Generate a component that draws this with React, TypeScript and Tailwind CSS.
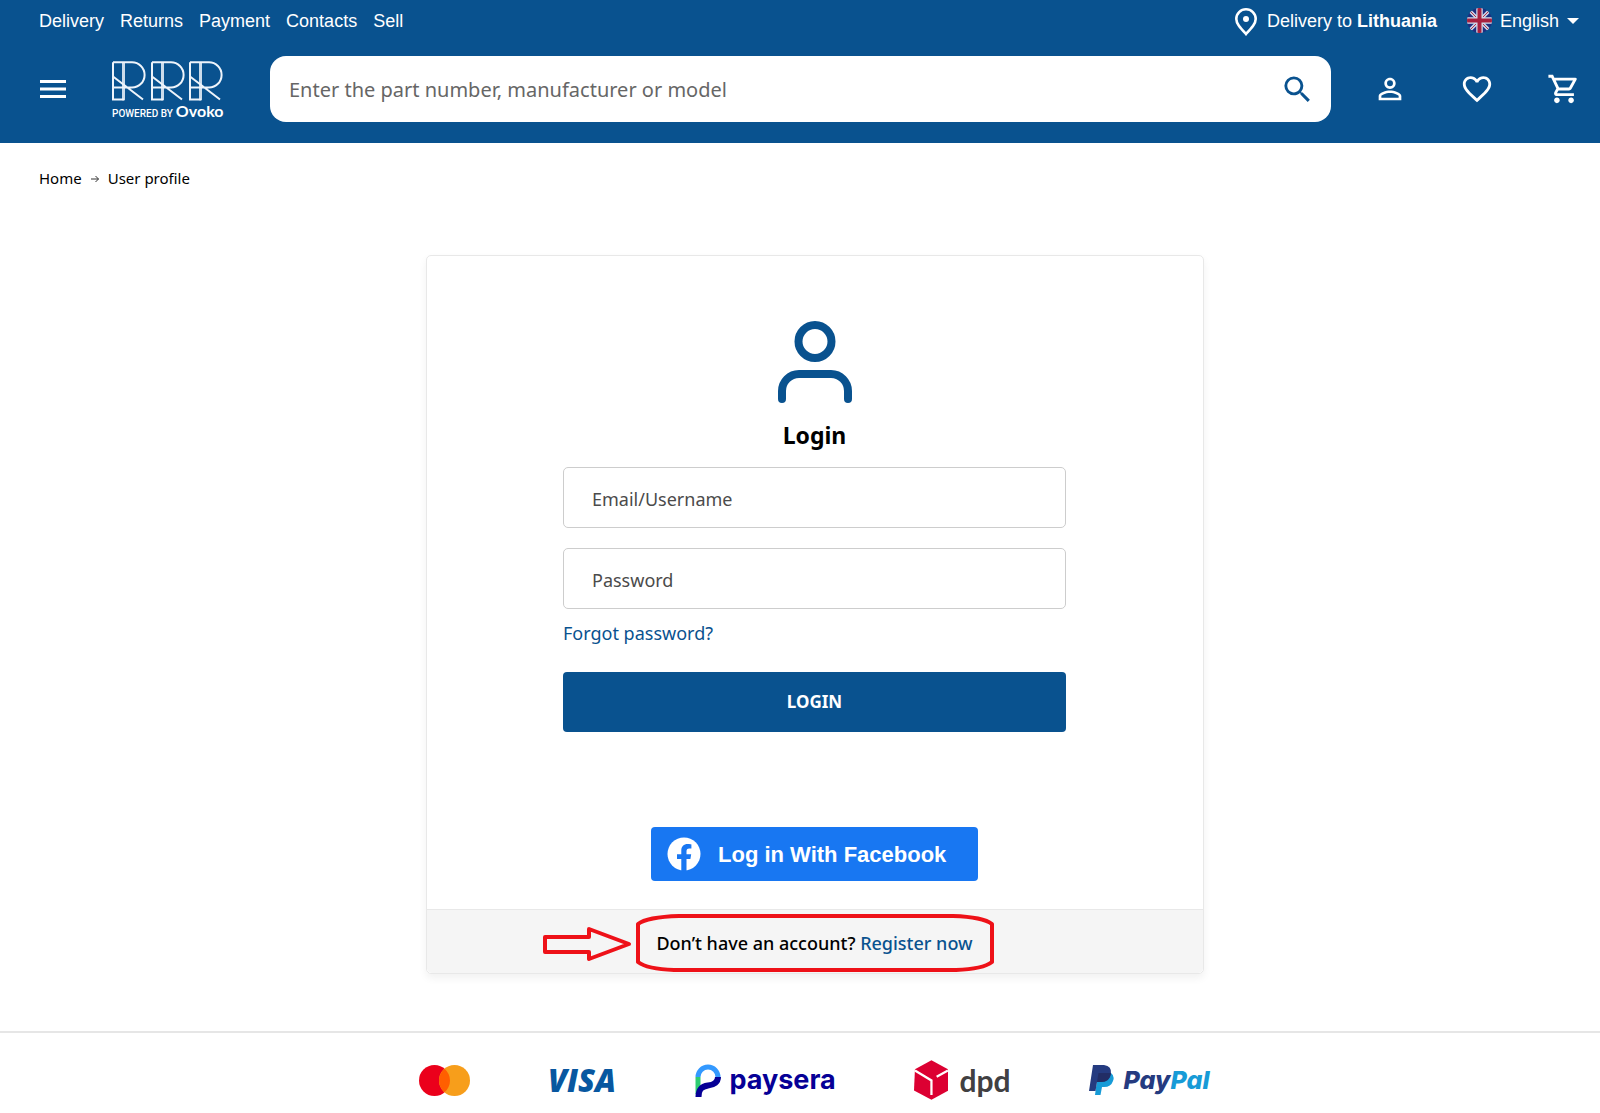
import type { ReactNode } from "react";
import { MdFavoriteBorder, MdOutlineShoppingCart, MdPersonOutline, MdSearch } from "react-icons/md";

const topLinks = ["Delivery", "Returns", "Payment", "Contacts", "Sell"];

function LetterMark({ x }: { x: number }) {
  return (
    <g transform={`translate(${x} 0)`}>
      <path d="M1 1.300H20A12.600 12.600 0 0 1 20 26.500H1M12 38.500H1V1.300M1 15.500L31 38.500" />
      <path d="M11.500 1V39.300" strokeWidth="3" strokeOpacity="0.85" />
    </g>
  );
}

function BrandLogo() {
  return (
    <a href="#" aria-label="RRR powered by Ovoko" className="flex w-[112px] shrink-0 flex-col pt-1">
      <svg viewBox="0 0 112 40" className="h-10 w-full" fill="none" stroke="#eef4fb" strokeWidth="2" aria-hidden="true">
        <LetterMark x={0} />
        <LetterMark x={39} />
        <LetterMark x={77} />
      </svg>
      <span className="flex h-5 items-baseline gap-[3px] whitespace-nowrap leading-5">
        <span className="font-[Roboto] text-[10px] font-medium">POWERED BY</span>
        <span className="font-[Lato] text-base leading-5 font-bold">Ovoko</span>
      </span>
    </a>
  );
}

function PinIcon() {
  return (
    <svg viewBox="0 0 22 28" className="mt-[3px] h-7 w-[22px]" fill="none" aria-hidden="true">
      <path d="M11 26C5 19.500 1.300 15.500 1.300 11A9.700 9.700 0 0 1 20.700 11C20.700 15.500 17 19.500 11 26Z" stroke="white" strokeWidth="2.600" />
      <circle cx="11" cy="11" r="3" fill="white" />
    </svg>
  );
}

function FlagIcon() {
  return (
    <svg viewBox="0 0 50 50" className="size-[25px]" aria-hidden="true">
      <defs>
        <clipPath id="flag-round">
          <circle cx="25" cy="25" r="25" />
        </clipPath>
      </defs>
      <g clipPath="url(#flag-round)">
        <path fill="#1c2f80" d="M0 0h50v50H0z" />
        <path d="M2 2L48 48M48 2L2 48" stroke="#c9d3e6" strokeWidth="7" />
        <path d="M2 2L48 48M48 2L2 48" stroke="#b3304b" strokeWidth="2" />
        <path d="M25 0V50M0 25H50" stroke="#d5dbe9" strokeWidth="13" />
        <path d="M25 0V50M0 25H50" stroke="#a8203f" strokeWidth="8" />
      </g>
    </svg>
  );
}

function IconButton({ label, children }: { label: string; children: ReactNode }) {
  return (
    <button type="button" aria-label={label} className="shrink-0">
      {children}
    </button>
  );
}

function Header() {
  return (
    <header className="bg-[#09528f] pr-[19px] pb-[21px] pl-[39px] text-white">
      <div className="flex h-14 items-start justify-between pt-[5px] font-['Liberation_Sans',sans-serif] text-lg">
        <nav className="flex gap-4 pt-0.5">
          {topLinks.map((t) => (
            <a key={t} href="#">
              {t}
            </a>
          ))}
        </nav>
        <div className="flex items-center pr-0.5">
          <button type="button" className="flex items-center gap-[10px]">
            <PinIcon />
            <span>
              Delivery to <strong>Lithuania</strong>
            </span>
          </button>
          <label className="relative ml-[30px] flex items-center gap-2">
            <FlagIcon />
            <select aria-label="Language" className="w-[79px] appearance-none bg-transparent">
              <option>English</option>
            </select>
            <svg viewBox="0 0 12 6" className="pointer-events-none absolute right-0 h-[6px] w-3" aria-hidden="true">
              <path d="M0 0H12L6 6Z" fill="white" />
            </svg>
          </label>
        </div>
      </div>
      <div className="flex items-center">
        <button type="button" aria-label="Menu" className="ml-px mr-[46px] shrink-0">
          <svg viewBox="0 0 26 18" className="h-[18px] w-[26px]" fill="white" aria-hidden="true">
            <path d="M0 0h26v3H0zM0 7.500h26v3H0zM0 15h26v3H0z" />
          </svg>
        </button>
        <BrandLogo />
        <form className="mr-[42px] ml-[46px] flex h-[66px] grow items-center rounded-2xl bg-white pr-4 pl-[19px]">
          <input
            type="search"
            aria-label="Search parts"
            placeholder="Enter the part number, manufacturer or model"
            className="min-w-0 grow bg-transparent pt-0.5 text-xl text-black outline-none placeholder:text-[#666]"
          />
          <button type="button" aria-label="Search">
            <MdSearch className="size-[35px] text-[#09528f]" />
          </button>
        </form>
        <div className="flex gap-[53px]">
          <IconButton label="Account">
            <MdPersonOutline className="size-[34px]" />
          </IconButton>
          <IconButton label="Favourites">
            <MdFavoriteBorder className="size-[34px]" />
          </IconButton>
          <IconButton label="Cart">
            <MdOutlineShoppingCart className="size-[34px]" />
          </IconButton>
        </div>
      </div>
    </header>
  );
}

function ProfileIcon() {
  return (
    <svg viewBox="0 0 74 82" className="h-[82px] w-[74px]" fill="none" stroke="#09528f" strokeWidth="8" strokeLinecap="round" aria-hidden="true">
      <circle cx="37" cy="20.500" r="16.500" />
      <path d="M4 78V70A17 17 0 0 1 21 53H53A17 17 0 0 1 70 70V78" />
    </svg>
  );
}

const field =
  "h-[61px] w-full rounded-[5px] border border-[#cdcdcd] px-7 pt-0.5 text-lg text-black outline-none placeholder:text-[#4b4b4b]";

function LoginCard() {
  return (
    <section className="mx-auto max-w-[778px] rounded-[5px] border border-[#e8e8e8] shadow-[0_4px_8px_rgba(0,0,0,0.06)]">
      <div className="flex flex-col items-center px-6 pt-[65px] pb-7">
        <ProfileIcon />
        <h1 className="mt-4 text-[23px] leading-8 font-bold text-black">Login</h1>
        <form className="mt-4 flex w-full max-w-[503px] flex-col">
          <input type="text" aria-label="Email/Username" placeholder="Email/Username" className={field} />
          <input type="password" aria-label="Password" placeholder="Password" className={`mt-5 ${field}`} />
          <a href="#" className="mt-3 self-start text-lg leading-6 text-[#09528f]">
            Forgot password?
          </a>
          <button type="button" className="mt-[27px] h-[60px] rounded-[4px] bg-[#09528f] text-[17px] font-bold text-white">
            LOGIN
          </button>
        </form>
        <button
          type="button"
          className="mt-[95px] flex h-[54px] w-[327px] items-center gap-[17px] rounded-[4px] bg-[#1877f2] pl-4 font-['Liberation_Sans',sans-serif] text-[22px] font-bold whitespace-nowrap text-white"
        >
          <svg viewBox="0 0 34 34" className="size-[34px]" aria-hidden="true">
            <circle cx="17" cy="17" r="16.500" fill="white" />
            <path
              d="M14.300 34V22H10V17.200H14.300V13.600C14.300 9.400 16.800 7 20.700 7C22.500 7 24.400 7.400 24.400 7.400V11.500H22.300C20.100 11.500 19.500 12.800 19.500 14.200V17.200H24.200L23.400 22H19.500V34Z"
              fill="#1877f2"
            />
          </svg>
          Log in With Facebook
        </button>
      </div>
      <div className="flex h-16 items-center justify-center rounded-b-[5px] border-t border-[#e8e8e8] bg-[#f5f5f5] pt-0.5">
        <p className="relative text-lg font-medium text-black">
          Don’t have an account?{" "}
          <a href="#" className="text-[#09528f]">
            Register now
          </a>
          <svg
            viewBox="0 0 452 60"
            className="pointer-events-none absolute top-1/2 -right-[22px] h-[60px] w-[452px] max-w-none -translate-y-1/2"
            fill="none"
            stroke="#ee1118"
            strokeWidth="4"
            aria-hidden="true"
          >
            <path d="M2 24H46V16L86 31L46 46V39H2Z" strokeLinejoin="round" />
            <path d="M136 3H410Q440 4 449 11V49Q440 56 413 57H131Q104 56 95 49V11Q104 4 136 3Z" strokeLinejoin="round" />
          </svg>
        </p>
      </div>
    </section>
  );
}

function Payments() {
  return (
    <footer className="mt-[57px] border-t-2 border-[#e6e6e6] pr-[10px] pl-[39px]">
      <div className="flex h-[94px] items-center justify-center gap-[78px] whitespace-nowrap">
        <svg viewBox="0 0 51 31" className="h-[31px] w-[51px]" role="img" aria-label="Mastercard">
          <circle cx="15.500" cy="15.500" r="15.500" fill="#eb001b" />
          <circle cx="35.500" cy="15.500" r="15.500" fill="#f79e1b" />
          <path d="M25.500 3.660a15.500 15.500 0 0 1 0 23.680a15.500 15.500 0 0 1 0-23.680Z" fill="#ff5f00" />
        </svg>
        <span className="w-[69px] text-center font-['Open_Sans'] text-[31px] leading-8 font-extrabold text-[#0857a0] italic">VISA</span>
        <span className="flex w-[141px] items-center gap-[9px]">
          <svg viewBox="0 0 26 33" className="h-[33px] w-[26px] shrink-0" fill="none" strokeWidth="5" aria-hidden="true">
            <path d="M3 13V30" stroke="#2ecc71" />
            <path d="M3 13A10 10 0 0 1 23 13" stroke="#3399ff" />
            <path d="M23 13C23 18 19 21 13 21.500C6 22.500 3.500 26 3.500 33" stroke="#060096" strokeWidth="6" />
          </svg>
          <span className="font-[Inter] text-[27px] leading-8 font-bold text-[#060096]">paysera</span>
        </span>
        <span className="flex w-[97px] items-center gap-[11px]">
          <svg viewBox="0 0 37 42" className="h-[42px] w-[37px]" aria-hidden="true">
            <path d="M18.500 0L36 9.500L37 32L18.500 42L0 32L1 9.500Z" fill="#dc0032" />
            <path d="M1 11L18.500 21.500V37M24 17.500L36 11" stroke="white" strokeWidth="2.400" fill="none" />
          </svg>
          <span className="font-[Lato] text-[30px] leading-8 font-bold text-[#414042]">dpd</span>
        </span>
        <span className="flex w-[122px] items-center gap-[10px]">
          <svg viewBox="0 0 25 30" className="h-[30px] w-[25px] shrink-0" aria-hidden="true">
            <path d="M9 8H22Q26 11 24 16Q22 22 15 22H13L11.500 30H6Z" fill="#179bd7" />
            <path d="M4 0H15Q23 1 22 9Q20 17 12 17H8L6.500 26H0Z" fill="#253b80" />
            <path d="M9.500 8H22Q21 17 12 17H8Z" fill="#222d65" />
          </svg>
          <span className="font-[Inter] text-[25px] leading-8 font-extrabold text-[#253b80] italic">
            Pay<span className="text-[#179bd7]">Pal</span>
          </span>
        </span>
      </div>
    </footer>
  );
}

export default function App() {
  return (
    <div className="min-h-screen bg-white font-['Noto_Sans',sans-serif] text-black">
      <Header />
      <main className="pr-[10px] pl-[39px]">
        <nav aria-label="Breadcrumb" className="flex h-[71px] items-center gap-[9px] text-[15px]">
          <a href="#">Home</a>
          <svg viewBox="0 0 8 8" className="size-2" fill="none" stroke="#333" aria-hidden="true">
            <path d="M0 4H7.500M4.500 1L7.500 4L4.500 7" />
          </svg>
          <span>User profile</span>
        </nav>
        <div className="mt-[41px]">
          <LoginCard />
        </div>
      </main>
      <Payments />
    </div>
  );
}
